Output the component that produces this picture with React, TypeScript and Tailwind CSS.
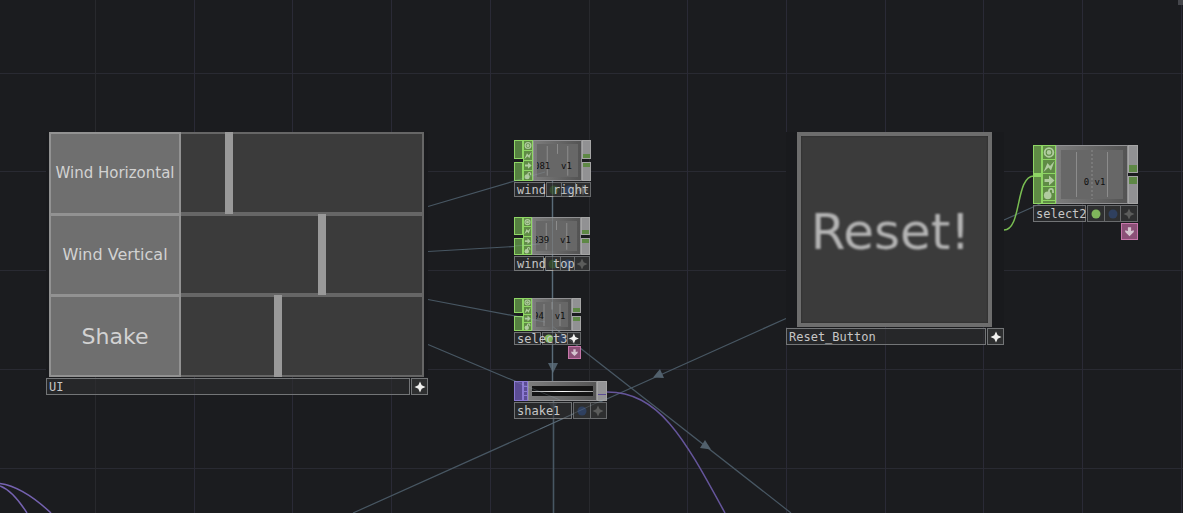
import React from "react";
import { clsx } from "clsx";

const gridX = [95, 194, 292, 391, 490, 589, 687, 786, 885, 983, 1082, 1181];
const gridY = [73, 171, 270, 369, 468];

function Grid() {
  return (
    <svg className="absolute inset-0 h-full w-full" aria-hidden="true">
      {gridY.map((y) => (
        <rect key={y} x="0" y={y} width="100%" height="1" fill="#292a32" />
      ))}
      {gridX.map((x, i) => (
        <rect key={x} x={x} y="0" width="1" height="100%" fill={i === 5 || i === 0 ? "#28292d" : "#2a2a36"} />
      ))}
      <rect x="1178" y="0" width="5" height="5" fill="#45464b" />
    </svg>
  );
}

function Links() {
  return (
    <svg className="pointer-events-none absolute inset-0 h-full w-full" fill="none" aria-hidden="true">
      <g stroke="#485763" strokeWidth="1.2">
        <path d="M428 206.500L523 178.500M428 251.500L523 246M428 299.500L523 317.500M428 344.500L523 384.500" />
        <path d="M786 318.500L353 513M552 326L791 513M1004 220L1060 195" />
        <path d="M552.500 181V381M553.500 396V513" strokeWidth="1.6" />
      </g>
      <g fill="#51606c">
        <path d="M548 363h10l-5 10z" />
        <path d="M548 402h10l-5 8z" opacity="0.5" />
        <path d="M653 377.500L660 369L664 378z" />
        <path d="M711 449.500L705 440L700 448z" />
      </g>
      <g strokeWidth="1.5">
        <path d="M607 392C660 392 685 440 725 513" stroke="#65559b" />
        <path d="M0 483.500C18 486 36 499 51 513M0 486C11 490 20 502 27 513" stroke="#7562b0" />
        <path d="M1004 230C1022 230 1015 176 1034 176" stroke="#79bd52" />
      </g>
    </svg>
  );
}

function Star({ dim }: { dim?: boolean }) {
  return (
    <svg viewBox="0 0 12 12" className="h-full max-h-3 w-full max-w-3" aria-hidden="true">
      <path
        d="M6 .5L7.700 4.300L11.500 6L7.700 7.700L6 11.500L4.300 7.700L.5 6L4.300 4.300z"
        fill={dim ? "#5b5c5b" : "#f2f2f0"}
      />
    </svg>
  );
}

function Dot({ color }: { color: string }) {
  return (
    <svg viewBox="0 0 12 12" className="h-full max-h-3 w-full max-w-3" aria-hidden="true">
      <circle cx="6" cy="6" r="4.500" fill={color} />
    </svg>
  );
}

const glyphs = [
  <g key="view" fill="none" stroke="currentColor" strokeWidth="1.900">
    <circle cx="7" cy="7" r="4.300" />
    <circle cx="7" cy="7" r="1.400" fill="currentColor" />
  </g>,
  <path key="bypass" d="M1.500 12.500L5.500 3.500L8 6.500L12.500 1.500L9 11L6.500 8z" fill="currentColor" />,
  <path key="export" d="M2.500 5.500h4.500V2L12.500 7L7 12V8.500H2.500z" fill="currentColor" />,
  <g key="lock">
    <circle cx="5.700" cy="9" r="3.800" fill="currentColor" />
    <path d="M7 7V4.500a2 2 0 0 1 4 0V6.500" fill="none" stroke="currentColor" strokeWidth="1.800" />
  </g>,
];

function Flags({ width, foot }: { width: string; foot?: boolean }) {
  return (
    <div className={clsx("flex shrink-0 flex-col border border-[#8fd665] bg-[#5f8b45] text-[#b0cb9f]", width)}>
      {glyphs.map((g, i) => (
        <div key={i} className={clsx("min-h-0 flex-1", (i < 3 || foot) && "border-b border-[#8fd665]")}>
          <svg viewBox="1 1 12 12" className="h-full w-full" aria-hidden="true">
            {g}
          </svg>
        </div>
      ))}
      {foot && <div className="h-[2px]" />}
    </div>
  );
}

function Plugs({ input, tall }: { input?: boolean; tall?: boolean }) {
  const box = input ? "border-[#8fd665] bg-[#558040]" : "border-[#a5a5a5] bg-[#919193]";
  const band = clsx("bg-[#5e8845]", tall ? "h-[7px]" : "h-1");
  return (
    <div className={clsx("flex shrink-0 flex-col gap-[3px]", tall ? "w-[10px]" : "w-[9px]")}>
      <div className={clsx("flex flex-1 flex-col justify-end border", box)}>{!input && <div className={band} />}</div>
      <div className={clsx("flex-1 border", box)}>{!input && <div className={band} />}</div>
    </div>
  );
}

function NameBar({
  name,
  nameWidth,
  height,
  children,
}: {
  name: string;
  nameWidth: string;
  height: string;
  children: React.ReactNode;
}) {
  return (
    <div className={clsx("mt-px flex gap-px", height)}>
      <div className={clsx("border border-[#717375] bg-[#35363880] px-[2px]", nameWidth)}>
        <span className="relative z-10 flex h-full items-center pt-px text-[12px] leading-4 whitespace-pre text-[#c6c6c6]">
          {name}
        </span>
      </div>
      <div className="flex flex-1 border border-[#696b6d] bg-[#2e2f30]">{children}</div>
    </div>
  );
}

function Cell({ last, children }: { last?: boolean; children: React.ReactNode }) {
  return (
    <div className={clsx("flex min-w-0 flex-1 items-center justify-center", !last && "border-r border-[#696b6d]")}>
      {children}
    </div>
  );
}

function PinkFlag({ size }: { size: string }) {
  return (
    <div className={clsx("ml-auto flex items-center justify-center border border-[#c777ab] bg-[#8b5077]", size)}>
      <svg viewBox="0 0 14 14" className="h-full w-full" aria-hidden="true">
        <path d="M5.500 3h3v3.500L11 5.800V7.500L7 11.500L3 7.500V5.800L5.500 6.500z" fill="#d4c4cf" />
      </svg>
    </div>
  );
}

function SelectNode({
  place,
  body,
  name,
  nameWidth,
  barHeight,
  flagsWidth,
  values,
  tall,
  live,
  dimStar,
  pink,
}: {
  place: string;
  body: string;
  name: string;
  nameWidth: string;
  barHeight: string;
  flagsWidth: string;
  values: string;
  tall?: boolean;
  live?: boolean;
  dimStar?: boolean;
  pink?: string;
}) {
  return (
    <section aria-label={name} className={clsx("absolute", place)}>
      <div className={clsx("flex", body)}>
        {tall ? (
          <div className="flex w-[9px] items-center border border-[#8fd665] bg-[#5f8b45]">
            <div className="h-1 w-full bg-[#8fd665]" />
          </div>
        ) : (
          <Plugs input />
        )}
        <Flags width={flagsWidth} foot={tall} />
        <div
          className={clsx(
            "flex min-w-0 flex-1 border border-[#919193] bg-linear-to-r from-[#7c7c7c] to-[#535353]",
            tall ? "p-1" : "p-[3px]",
          )}
        >
          <div
            className={clsx(
              "relative flex min-w-0 flex-1 overflow-hidden bg-[#676767]",
              tall ? "justify-center" : "justify-start",
            )}
          >
            <svg className="absolute inset-0 h-full w-full" aria-hidden="true">
              <g stroke="#8c8c8c" strokeWidth="1">
                <line x1="25%" x2="25%" y1="2" y2="96%" />
                <line x1="50%" x2="50%" y1="0" y2={tall ? "100%" : "30%"} strokeDasharray={tall ? "2 2" : undefined} />
                <line x1="75%" x2="75%" y1="2" y2="96%" />
              </g>
            </svg>
            <span
              className={clsx(
                "relative text-[9px] leading-3 whitespace-pre text-[#101010]",
                tall ? "mt-[26px] ml-[5px]" : "mt-auto mb-[5px] -ml-[3px]",
              )}
            >
              {values}
            </span>
          </div>
        </div>
        <Plugs tall={tall} />
      </div>
      <NameBar name={name} nameWidth={nameWidth} height={barHeight}>
        <Cell>
          <Dot color={live ? "#80b65b" : "#344a2e"} />
        </Cell>
        <Cell>
          <Dot color="#2f405f" />
        </Cell>
        <Cell last>
          <Star dim={dimStar} />
        </Cell>
      </NameBar>
      {pink && (
        <div className="mt-px flex">
          <PinkFlag size={pink} />
        </div>
      )}
    </section>
  );
}

function SliderRow({ label, text, value, last }: { label: string; text: string; value: number; last?: boolean }) {
  const id = label.toLowerCase().replace(" ", "-");
  return (
    <div className="flex min-h-0 flex-1">
      <label
        htmlFor={id}
        className={clsx(
          "flex w-[132px] items-center justify-center border-2 border-[#929292] bg-[#6f6f6f] text-[#d2d2d2]",
          text,
          !last && "border-b-1",
        )}
      >
        {label}
      </label>
      <div className="flex flex-1 border-y-2 border-r-2 border-[#666666] bg-[#3b3b3b]">
        <input
          id={id}
          type="range"
          min={0}
          max={1}
          step="any"
          defaultValue={value}
          className="-my-[2px] block w-full appearance-none bg-transparent [&::-webkit-slider-runnable-track]:h-full [&::-webkit-slider-thumb]:h-full [&::-webkit-slider-thumb]:w-2 [&::-webkit-slider-thumb]:appearance-none [&::-webkit-slider-thumb]:bg-[#999999]"
        />
      </div>
    </div>
  );
}

function PanelBar({ name }: { name: string }) {
  return (
    <div className="mt-px flex h-[17px] gap-px">
      <div className="flex flex-1 items-center border border-[#737577] bg-[#2e2f3099] px-[2px] pt-px text-[12px] leading-4 text-[#c6c6c6]">
        {name}
      </div>
      <div className="flex w-[17px] items-center justify-center border border-[#737577] bg-[#2e2f30]">
        <Star />
      </div>
    </div>
  );
}

export default function App() {
  return (
    <main className="relative h-screen w-full overflow-hidden bg-[#1b1c1f] font-['DejaVu_Sans_Mono',monospace]">
      <Grid />
      <Links />

      <section aria-label="UI" className="absolute top-[132px] left-[46px] w-[382px]">
        <div className="bg-[#191a1d] pr-1 pl-[3px]">
          <div className="flex h-[245px] flex-col font-['DejaVu_Sans',sans-serif]">
            <SliderRow label="Wind Horizontal" text="text-[15px]" value={0.19} />
            <SliderRow label="Wind Vertical" text="text-[16px]" value={0.586} />
            <SliderRow label="Shake" text="text-[22px]" value={0.397} last />
          </div>
        </div>
        <PanelBar name="UI" />
      </section>

      <SelectNode
        place="top-[140px] left-[514px] w-[77px]"
        body="h-[41px]"
        name="wind_right"
        nameWidth="w-[31px]"
        barHeight="h-[15px]"
        flagsWidth="w-[10px]"
        values="081  v1"
        dimStar
      />
      <SelectNode
        place="top-[217px] left-[514px] w-[76px]"
        body="h-[38px]"
        name="wind_top"
        nameWidth="w-[30px]"
        barHeight="h-[15px]"
        flagsWidth="w-[9px]"
        values="339  v1"
        dimStar
      />
      <SelectNode
        place="top-[298px] left-[514px] w-[67px]"
        body="h-[33px]"
        name="select3"
        nameWidth="w-[27px]"
        barHeight="h-[13px]"
        flagsWidth="w-[9px]"
        values="94  v1"
        live
        pink="size-[13px]"
      />

      <section aria-label="shake1" className="absolute top-[381px] left-[514px] w-[93px]">
        <div className="flex h-5">
          <div className="w-[9px] border border-[#8b79d2] bg-[#5b4c94]" />
          <div className="flex w-[5px] flex-col gap-px border border-[#8b79d2] bg-[#8b79d2]">
            <div className="flex-1 bg-[#5b4c94]" />
            <div className="flex-1 bg-[#5b4c94]" />
            <div className="flex-1 bg-[#5b4c94]" />
            <div className="flex-1 bg-[#5b4c94]" />
          </div>
          <div className="flex flex-1 border border-[#919193] bg-linear-to-r from-[#7c7c7c] to-[#555555] px-[3px] py-1">
            <div className="flex flex-1 items-center bg-[#151515]">
              <div className="h-px w-full bg-linear-to-r from-[#a0a0a0] via-white to-[#a0a0a0]" />
            </div>
          </div>
          <div className="flex w-[10px] items-end border border-[#a5a5a5] bg-[#949496] pb-[5px]">
            <div className="h-px w-full bg-[#5b4c94]" />
          </div>
        </div>
        <NameBar name="shake1" nameWidth="w-[58px]" height="h-[17px]">
          <Cell>
            <Dot color="#2f405f" />
          </Cell>
          <Cell last>
            <Star dim />
          </Cell>
        </NameBar>
      </section>

      <section aria-label="Reset_Button" className="absolute top-[132px] left-[786px] w-[218px]">
        <div className="flex justify-center bg-[#191a1d] pr-px">
          <button
            type="button"
            className="flex size-[195px] items-center justify-center border-4 border-[#6d6d6d] bg-[#3b3b3b] pt-1 pr-2 font-['DejaVu_Sans',sans-serif] text-[50px] leading-none text-[#b4b4b4] shadow-[inset_0_0_2px_#222]"
          >
            <span className="blur-[1px]">Reset!</span>
          </button>
        </div>
        <PanelBar name="Reset_Button" />
      </section>

      <SelectNode
        place="top-[145px] left-[1033px] w-[105px]"
        body="h-[59px]"
        name="select2"
        nameWidth="w-[53px]"
        barHeight="h-[17px]"
        flagsWidth="w-[14px]"
        values="0 v1"
        tall
        live
        dimStar
        pink="size-[17px]"
      />

      <svg
        className="pointer-events-none absolute inset-0 h-full w-full opacity-20"
        fill="none"
        stroke="#a3bccb"
        aria-hidden="true"
      >
        <path d="M514 181L545 172M514 246L540 244M514 316L545 322M514 381L560 400M552.500 181V381M552 326L575 344M607 398L540 429" />
      </svg>
    </main>
  );
}
